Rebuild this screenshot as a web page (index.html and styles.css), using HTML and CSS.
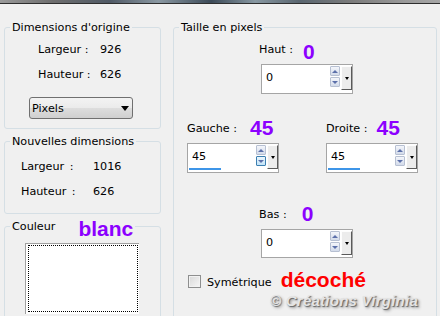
FILE: index.html
```html
<!DOCTYPE html>
<html lang="fr">
<head>
<meta charset="utf-8">
<title>Taille du support</title>
<link rel="stylesheet" href="styles.css">
</head>
<body>
<div class="topbar"></div>
<div class="main">
  <div class="left">
    <fieldset class="grp grp-orig">
      <legend>Dimensions d'origine</legend>
      <div class="dims dims-orig">
        <span class="dl">Largeur :</span><span class="dv">926</span>
        <span class="dl">Hauteur :</span><span class="dv">626</span>
      </div>
      <div class="select"><span>Pixels</span><span class="caret"></span></div>
    </fieldset>
    <fieldset class="grp grp-new">
      <legend>Nouvelles dimensions</legend>
      <div class="dims dims-new">
        <span class="dl">Largeur :</span><span class="dv">1016</span>
        <span class="dl">Hauteur :</span><span class="dv">626</span>
      </div>
    </fieldset>
    <fieldset class="grp grp-color">
      <legend class="legend-color">Couleur<span class="note-blanc">blanc</span></legend>
      <div class="swatch"><div class="focus"></div></div>
    </fieldset>
  </div>
  <fieldset class="grp grp-size">
    <legend class="legend-size">Taille en pixels</legend>
    <div class="size">
      <div class="field field-center">
        <div class="flabel">Haut :<span class="num n-haut">0</span></div>
        <div class="spin">
          <div class="spin-val"><span>0</span></div>
          <div class="spin-arrows"><span class="arr up"></span><span class="arr down"></span></div>
          <div class="spin-drop"><span class="caret-s"></span></div>
        </div>
      </div>
      <div class="pair">
        <div class="field field-left">
          <div class="flabel">Gauche :<span class="num n-gauche">45</span></div>
          <div class="spin">
            <div class="spin-val"><span>45</span><div class="bar"></div></div>
            <div class="spin-arrows"><span class="arr up"></span><span class="arr down hot"></span></div>
            <div class="spin-drop"><span class="caret-s"></span></div>
          </div>
        </div>
        <div class="field">
          <div class="flabel">Droite :<span class="num n-droite">45</span></div>
          <div class="spin">
            <div class="spin-val"><span>45</span><div class="bar"></div></div>
            <div class="spin-arrows"><span class="arr up"></span><span class="arr down"></span></div>
            <div class="spin-drop"><span class="caret-s"></span></div>
          </div>
        </div>
      </div>
      <div class="field field-center field-bas">
        <div class="flabel">Bas :<span class="num n-bas">0</span></div>
        <div class="spin spin-short">
          <div class="spin-val"><span>0</span></div>
          <div class="spin-arrows"><span class="arr up"></span><span class="arr down"></span></div>
          <div class="spin-drop"><span class="caret-s"></span></div>
        </div>
      </div>
      <div class="check">
        <span class="box"></span>
        <span class="check-text">Symétrique<span class="note-red">décoché</span></span>
      </div>
    </div>
  </fieldset>
</div>
<div class="watermark">© Créations Virginia</div>
</body>
</html>
```
FILE: styles.css
```css
html, body {
  margin: 0;
  height: 316px;
  overflow: hidden;
  background: #f0f0f0;
}
body {
  font-family: "DejaVu Sans", sans-serif;
  font-size: 11.2px;
  color: #000;
  position: relative;
}
.topbar {
  height: 3px;
  background: linear-gradient(90deg, #9a9a9a 0%, #6e6e6e 12%, #505a66 25%, #8a98a2 36%, #3c4a58 48%, #8898a2 58%, #5a6670 68%, #7c7c7c 80%, #9a9a9a 92%, #a6a6a6 100%);
  border-bottom: 1px solid #2e2e2e;
}
.main {
  display: flex;
  gap: 12px;
  padding: 17px 3px 0 4px;
}
.left {
  width: 157px;
  flex: none;
  display: flex;
  flex-direction: column;
  gap: 6px;
}
.grp {
  margin: 0;
  padding: 0;
  min-width: 0;
  border: 1px solid #d5dfe5;
  border-radius: 3px;
}
.grp legend {
  padding: 0 2px;
  margin-left: 5px;
  line-height: 13px;
}
.dims {
  display: grid;
  grid-template-columns: 62px auto;
  line-height: 25px;
}
.dims-orig {
  padding: 2.5px 0 0 33px;
}
.dims-new {
  padding: 6px 0 9px 16px;
  grid-template-columns: 72px auto;
  word-spacing: 2px;
}
.select {
  margin: 10.5px 0 9px 24px;
  width: 104px;
  height: 22px;
  box-sizing: border-box;
  border: 1px solid #707070;
  border-radius: 3px;
  background: linear-gradient(#f3f3f3 0%, #ebebeb 48%, #dddddd 52%, #cfcfcf 100%);
  display: flex;
  align-items: center;
  justify-content: space-between;
  padding: 0 3px 0 2px;
}
.caret {
  width: 0;
  height: 0;
  border-left: 4.5px solid transparent;
  border-right: 4.5px solid transparent;
  border-top: 5px solid #000;
}
.grp-color {
  padding-bottom: 30px;
}
.legend-color {
  white-space: nowrap;
}
.note-blanc {
  font: bold 21px "Liberation Sans", Arial, sans-serif;
  color: #8c00ff;
  margin-left: 23px;
  line-height: 0;
  vertical-align: -6px;
}
.swatch {
  margin: 10px 0 0 20px;
  width: 114px;
  height: 71px;
  box-sizing: border-box;
  background: #fff;
  border-top: 1px solid #a0a0a0;
  border-left: 1px solid #a0a0a0;
  padding: 1px 1px 2px 2px;
}
.focus {
  height: 100%;
  box-sizing: border-box;
  border: 1px dotted #000;
}
.grp-size {
  flex: 1;
}
.legend-size {
  margin-left: 4px;
}
.size {
  padding: 3px 0 40px 13px;
}
.field-center {
  margin-left: 72px;
  width: 94px;
}
.field-center .spin {
  margin-left: 2px;
}
.flabel {
  height: 24px;
  display: flex;
  align-items: center;
  white-space: pre;
}
.num {
  font: bold 21px "Liberation Sans", Arial, sans-serif;
  color: #8c00ff;
  line-height: 24px;
}
.n-haut { margin-left: 10px; margin-top: 5px; }
.n-gauche { margin-left: 13px; }
.n-droite { margin-left: 9px; }
.n-bas { margin-left: 15px; }
.pair {
  display: flex;
  margin-top: 22px;
}
.field-left {
  width: 139px;
}
.field-bas {
  margin-top: 29px;
}
.spin {
  margin-top: 3px;
  width: 92px;
  height: 30px;
  box-sizing: border-box;
  border: 1px solid #a5a5a5;
  background: #fff;
  display: flex;
  align-items: flex-start;
}
.spin-short {
  height: 29px;
}
.spin-val {
  flex: 1;
  padding: 1px 0 0 4px;
  line-height: 23px;
}
.bar {
  width: 32px;
  height: 2px;
  margin-left: -3px;
  background: #3d95e8;
}
.spin-arrows {
  width: 10px;
  margin: 1px 1px 0 0;
  display: flex;
  flex-direction: column;
  gap: 1px;
}
.arr {
  height: 10px;
  box-sizing: border-box;
  border: 1px solid #b7c0d2;
  border-radius: 1px;
  background: linear-gradient(#f4f6fb, #d3dbea);
  display: flex;
  align-items: center;
  justify-content: center;
}
.arr::after {
  content: "";
  width: 0;
  height: 0;
  border-left: 3px solid transparent;
  border-right: 3px solid transparent;
}
.arr.up::after {
  border-bottom: 3px solid #5c70aa;
}
.arr.down::after {
  border-top: 3px solid #5c70aa;
}
.arr.hot {
  border-color: #3c7fb1;
  background: linear-gradient(#eaf6fd, #c4e4f8);
}
.spin-drop {
  width: 11px;
  height: 24px;
  margin-top: 1px;
  box-sizing: border-box;
  background: #ececec;
  border-top: 1px solid #fdfdfd;
  border-left: 1px solid #fdfdfd;
  border-right: 1px solid #5a5a5a;
  border-bottom: 1px solid #5a5a5a;
  display: flex;
  align-items: center;
  justify-content: center;
}
.caret-s {
  width: 0;
  height: 0;
  border-left: 2.5px solid transparent;
  border-right: 2.5px solid transparent;
  border-top: 3px solid #000;
}
.check {
  margin-top: 13px;
  height: 20px;
  display: flex;
  align-items: center;
}
.box {
  width: 13px;
  height: 13px;
  box-sizing: border-box;
  margin-left: 1px;
  border: 1px solid #8e8f8f;
  background: linear-gradient(135deg, #d8d8d8, #f7f7f7);
  box-shadow: inset 0 0 0 1px #f2f2f2;
}
.check-text {
  margin-left: 6px;
  line-height: 20px;
}
.note-red {
  font: bold 21px "Liberation Sans", Arial, sans-serif;
  color: #ff0000;
  margin-left: 9px;
  line-height: 20px;
  vertical-align: -1px;
}
.watermark {
  position: absolute;
  left: 270px;
  top: 292px;
  font: italic bold 15px "Liberation Sans", Arial, sans-serif;
  letter-spacing: 0.25px;
  color: #e4e4e4;
  text-shadow: 1px 1px 1px #666, 2px 2px 3px #999;
  white-space: nowrap;
}
```
